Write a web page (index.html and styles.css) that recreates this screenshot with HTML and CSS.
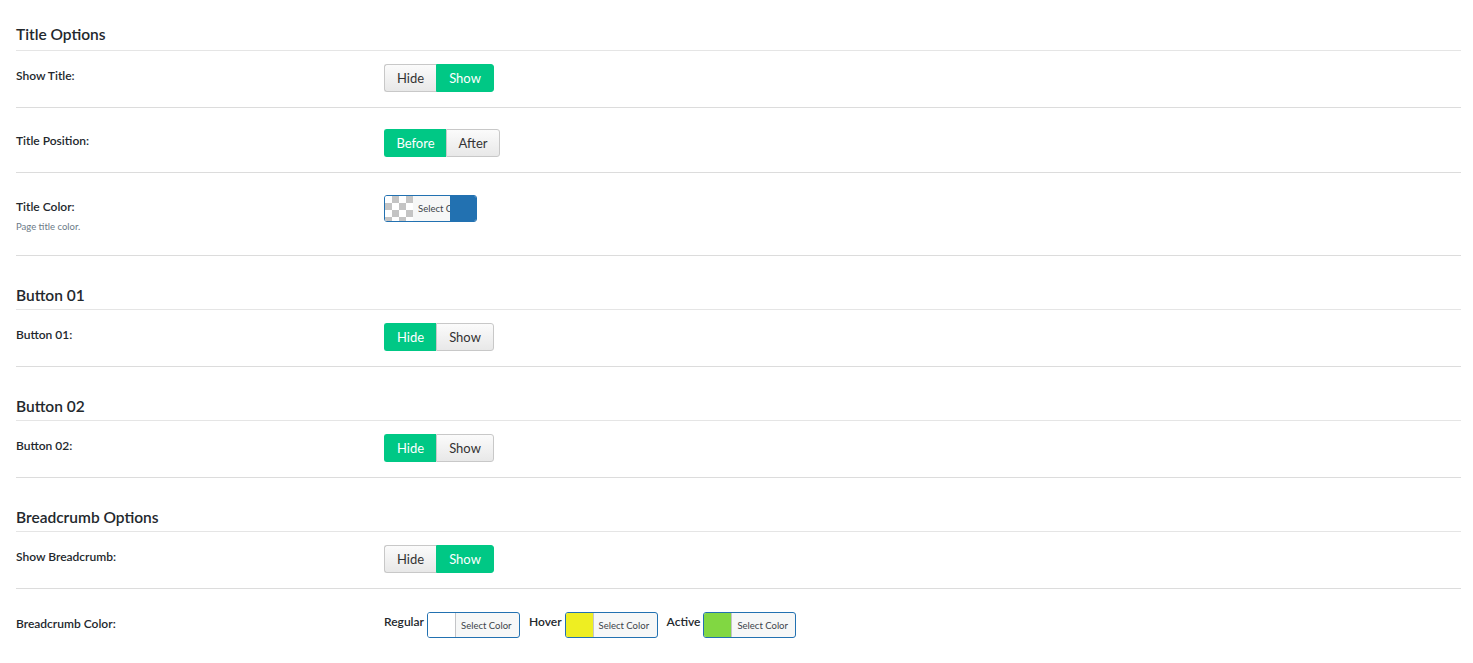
FILE: index.html
```html
<!DOCTYPE html>
<html>
<head>
<meta charset="utf-8">
<link rel="stylesheet" href="styles.css">
</head>
<body>
<div class="page">
  <section class="section first">
    <h3 class="section-title">Title Options</h3>
    <div class="row first-row">
      <div class="label"><span class="label-text">Show Title:</span></div>
      <div class="control">
        <div class="toggle"><span class="btn">Hide</span><span class="btn on">Show</span></div>
      </div>
    </div>
    <div class="row">
      <div class="label"><span class="label-text">Title Position:</span></div>
      <div class="control">
        <div class="toggle"><span class="btn on wide">Before</span><span class="btn">After</span></div>
      </div>
    </div>
    <div class="row tall">
      <div class="label">
        <span class="label-text">Title Color:</span>
        <span class="desc">Page title color.</span>
      </div>
      <div class="control">
        <div class="picker clipped">
          <span class="swatch checker"></span>
          <span class="picker-text">Select Color</span>
          <span class="picker-cover"></span>
        </div>
      </div>
    </div>
  </section>

  <section class="section">
    <h3 class="section-title">Button 01</h3>
    <div class="row first-row">
      <div class="label"><span class="label-text">Button 01:</span></div>
      <div class="control">
        <div class="toggle"><span class="btn on">Hide</span><span class="btn">Show</span></div>
      </div>
    </div>
  </section>

  <section class="section">
    <h3 class="section-title">Button 02</h3>
    <div class="row first-row">
      <div class="label"><span class="label-text">Button 02:</span></div>
      <div class="control">
        <div class="toggle"><span class="btn on">Hide</span><span class="btn">Show</span></div>
      </div>
    </div>
  </section>

  <section class="section">
    <h3 class="section-title">Breadcrumb Options</h3>
    <div class="row first-row">
      <div class="label"><span class="label-text">Show Breadcrumb:</span></div>
      <div class="control">
        <div class="toggle"><span class="btn">Hide</span><span class="btn on">Show</span></div>
      </div>
    </div>
    <div class="row last">
      <div class="label"><span class="label-text">Breadcrumb Color:</span></div>
      <div class="control colors">
        <span class="color-label">Regular</span>
        <div class="picker"><span class="swatch white"></span><span class="picker-text">Select Color</span></div>
        <span class="color-label">Hover</span>
        <div class="picker"><span class="swatch yellow"></span><span class="picker-text">Select Color</span></div>
        <span class="color-label">Active</span>
        <div class="picker"><span class="swatch green"></span><span class="picker-text">Select Color</span></div>
      </div>
    </div>
  </section>
</div>
</body>
</html>
```

FILE: styles.css
```css
html, body {
  margin: 0;
  padding: 0;
  background: #ffffff;
}

body {
  font-family: "Lato", "Open Sans", sans-serif;
  color: #23282d;
}

.page {
  padding: 0 12px 0 16px;
}

.section {
  padding-top: 29px;
}

.section.first {
  padding-top: 24px;
}

.section-title {
  margin: 0;
  font-size: 15.5px;
  font-weight: 600;
  line-height: 20px;
  padding-bottom: 4px;
  border-bottom: 1px solid #e5e5e5;
  color: #23282d;
}

.section.first .section-title {
  padding-bottom: 6px;
}

.row {
  display: grid;
  grid-template-columns: 368px 1fr;
  padding: 21px 0 15px;
  border-bottom: 1px solid #dcdcdc;
}

.row.first-row {
  padding-top: 13px;
}

.row.tall {
  padding-top: 22px;
  padding-bottom: 22px;
}

.row.last {
  border-bottom: none;
  padding-top: 23px;
}

.label {
  display: flex;
  flex-direction: column;
  padding-top: 4px;
}

.label-text {
  font-size: 12px;
  font-weight: 600;
  line-height: 16px;
  color: #23282d;
}

.desc {
  margin-top: 6px;
  font-size: 9.5px;
  line-height: 12px;
  color: #6b7a87;
}

.control {
  display: flex;
  align-items: flex-start;
}

.toggle {
  display: flex;
  height: 28px;
}

.btn {
  display: flex;
  align-items: center;
  justify-content: center;
  box-sizing: border-box;
  width: 52px;
  height: 28px;
  font-size: 13px;
  color: #333;
  background: linear-gradient(#fbfbfb, #e8e8e8);
  border: 1px solid #c8c8c8;
}

.toggle .btn:first-child {
  border-radius: 3px 0 0 3px;
  border-right: none;
}

.toggle .btn:last-child {
  border-radius: 0 3px 3px 0;
  width: 58px;
}

.toggle .btn.wide {
  width: 62px;
}

.toggle .btn.wide + .btn {
  width: 54px;
}

.btn.on {
  background: #00c885;
  border-color: #00c885;
  color: #ffffff;
}

.picker {
  display: flex;
  box-sizing: border-box;
  width: 93px;
  height: 27px;
  border: 1px solid #2271b1;
  border-radius: 3px;
  overflow: hidden;
  background: #f6f7f7;
}

.swatch {
  flex: 0 0 28px;
  height: 100%;
  border-right: 1px solid #c3c4c7;
  box-sizing: border-box;
}

.swatch.white { background: #ffffff; }
.swatch.yellow { background: #eeee22; }
.swatch.green { background: #81d742; }

.swatch.checker {
  border-right: none;
  background-color: #ffffff;
  background-image:
    linear-gradient(45deg, #c4c4c4 25%, transparent 25%, transparent 75%, #c4c4c4 75%),
    linear-gradient(45deg, #c4c4c4 25%, transparent 25%, transparent 75%, #c4c4c4 75%);
  background-size: 14px 14px;
  background-position: 0 0, 7px 7px;
}

.picker-text {
  flex: 1 1 auto;
  display: flex;
  align-items: center;
  padding-left: 5px;
  font-size: 9.5px;
  color: #3c434a;
  white-space: nowrap;
  overflow: hidden;
}

.picker.clipped .picker-text {
  flex: 0 0 37px;
  padding-left: 5px;
  box-sizing: border-box;
}

.picker-cover {
  flex: 1 1 auto;
  background: #2271b1;
}

.colors {
  align-items: flex-start;
  gap: 0;
}

.color-label {
  font-size: 12px;
  font-weight: 600;
  line-height: 16px;
  padding-top: 2px;
  margin-right: 3px;
  color: #23282d;
}

.colors .picker {
  height: 26px;
  margin-right: 9px;
}
```
